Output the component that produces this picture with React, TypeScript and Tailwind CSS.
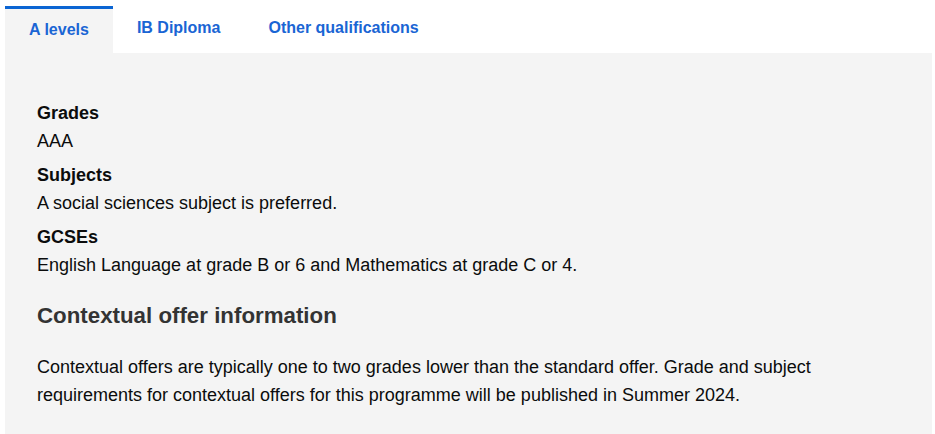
import {useState} from "react";

const tabs = ["A levels", "IB Diploma", "Other qualifications"];

const requirements = [
    {label: "Grades", value: "AAA"},
    {label: "Subjects", value: "A social sciences subject is preferred."},
    {label: "GCSEs", value: "English Language at grade B or 6 and Mathematics at grade C or 4."},
];

const App = () => {
    const [active, setActive] = useState(0);

    return (
        <div className="min-h-screen bg-white pl-[5px] pr-[3px] pt-[6px] font-['Liberation_Sans',Arial,sans-serif]">
            {/* tabs */}
            <ul className="flex items-start">
                {tabs.map((tab, i) => (
                    <li key={tab} className="list-none">
                        <button
                            onClick={() => setActive(i)}
                            className={`flex items-start px-6 text-[16px] leading-[18px] font-bold text-[#1a65d4] ${
                                active === i
                                    ? "h-[47px] pt-3 border-t-[3px] border-[#0b65d3] bg-[#f4f4f4]"
                                    : "h-[44px] pt-[13px]"
                            }`}
                        >
                            {tab}
                        </button>
                    </li>
                ))}
            </ul>

            {/* panel */}
            <div className="bg-[#f4f4f4] pl-8 pr-8 pt-[47px] pb-[27px] text-[18px] leading-[27.5px] text-[#0b0c0c]">
                <dl className="flex flex-col gap-[7px]">
                    {requirements.map((item) => (
                        <div key={item.label}>
                            <dt className="font-bold">{item.label}</dt>
                            <dd>{item.value}</dd>
                        </div>
                    ))}
                </dl>

                <h3 className="mt-[22px] text-[22.3px] leading-[30px] font-bold text-[#333]">
                    Contextual offer information
                </h3>

                <p className="mt-[23px] max-w-[800px]">
                    Contextual offers are typically one to two grades lower than the standard offer. Grade and subject
                    requirements for contextual offers for this programme will be published in Summer 2024.
                </p>
            </div>
        </div>
    );
};

export default App;
